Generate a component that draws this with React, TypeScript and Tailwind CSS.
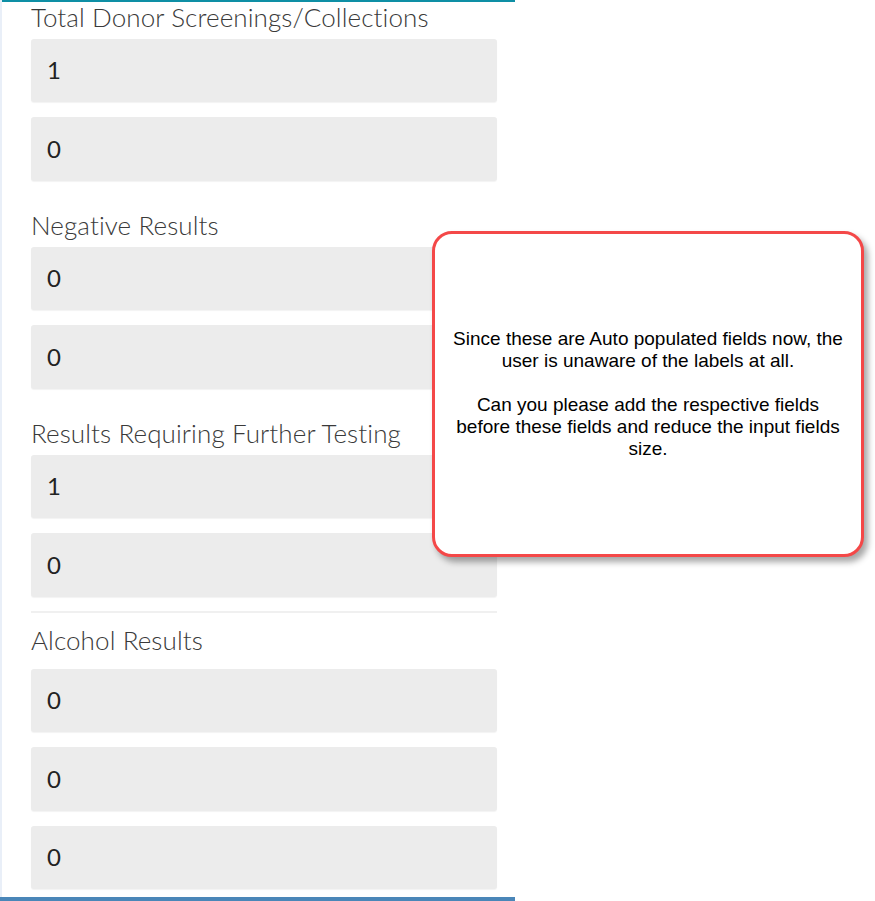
type Group = {
  label: string;
  values: string[];
  divider?: boolean;
};

const groups: Group[] = [
  { label: "Total Donor Screenings/Collections", values: ["1", "0"] },
  { label: "Negative Results", values: ["0", "0"] },
  { label: "Results Requiring Further Testing", values: ["1", "0"] },
  { label: "Alcohol Results", values: ["0", "0", "0"], divider: true },
];

function ReadOnlyField({ value, first }: { value: string; first: boolean }) {
  return (
    <div
      className={`flex h-[63.5px] items-center rounded-[3px] bg-[#ececec] pl-[16px] text-[24px] leading-none text-[#222] shadow-[0_1px_1px_rgba(0,0,0,0.05)] ${
        first ? "" : "mt-[15px]"
      }`}
    >
      {value}
    </div>
  );
}

export default function App() {
  return (
    <div
      className="relative flex h-[901px] w-[875px] overflow-hidden bg-white"
      style={{ fontFamily: "Lato, 'Noto Sans', sans-serif" }}
    >
      <div className="flex h-full w-[515px] flex-col">
        <div className="flex min-h-0 flex-1">
          <div className="w-[2px] bg-[#e9eff8]" />
          <div className="min-h-0 flex-1 overflow-hidden border-t-2 border-[#0e8fa5] pl-[29px] pr-[18px]">
            {groups.map((g, i) => (
              <div key={g.label}>
                {g.divider && <div className="mt-[14.5px] h-[2px] bg-[#f0f0f0]" />}
                <div
                  className={`flex items-end whitespace-nowrap text-[26px] font-light leading-none tracking-[0.1px] text-[#3a3a3a] ${
                    i === 0
                      ? "h-[36.5px] pb-[9px]"
                      : g.divider
                        ? "h-[55.5px] pb-[15.5px]"
                        : "h-[66px] pb-[9px]"
                  }`}
                >
                  {g.label}
                </div>
                {g.values.map((v, j) => (
                  <ReadOnlyField key={j} value={v} first={j === 0} />
                ))}
              </div>
            ))}
          </div>
        </div>
        <div className="h-[4px] bg-[#4a86b8]" />
      </div>

      {/* review comment callout */}
      <div
        className="absolute left-[432px] top-[231px] flex h-[326px] w-[432px] items-center justify-center rounded-[20px] border-[3px] border-[#f44848] bg-white px-[10px] text-center text-[19px] leading-[22px] text-black shadow-[4px_5px_6px_rgba(0,0,0,0.35)]"
        style={{ fontFamily: "'Liberation Sans', Arial, sans-serif" }}
      >
        <div className="whitespace-nowrap">
          <p>
            Since these are Auto populated fields now, the
            <br />
            user is unaware of the labels at all.
          </p>
          <p className="mt-[22px]">
            Can you please add the respective fields
            <br />
            before these fields and reduce the input fields
            <br />
            size.
          </p>
        </div>
      </div>
    </div>
  );
}
